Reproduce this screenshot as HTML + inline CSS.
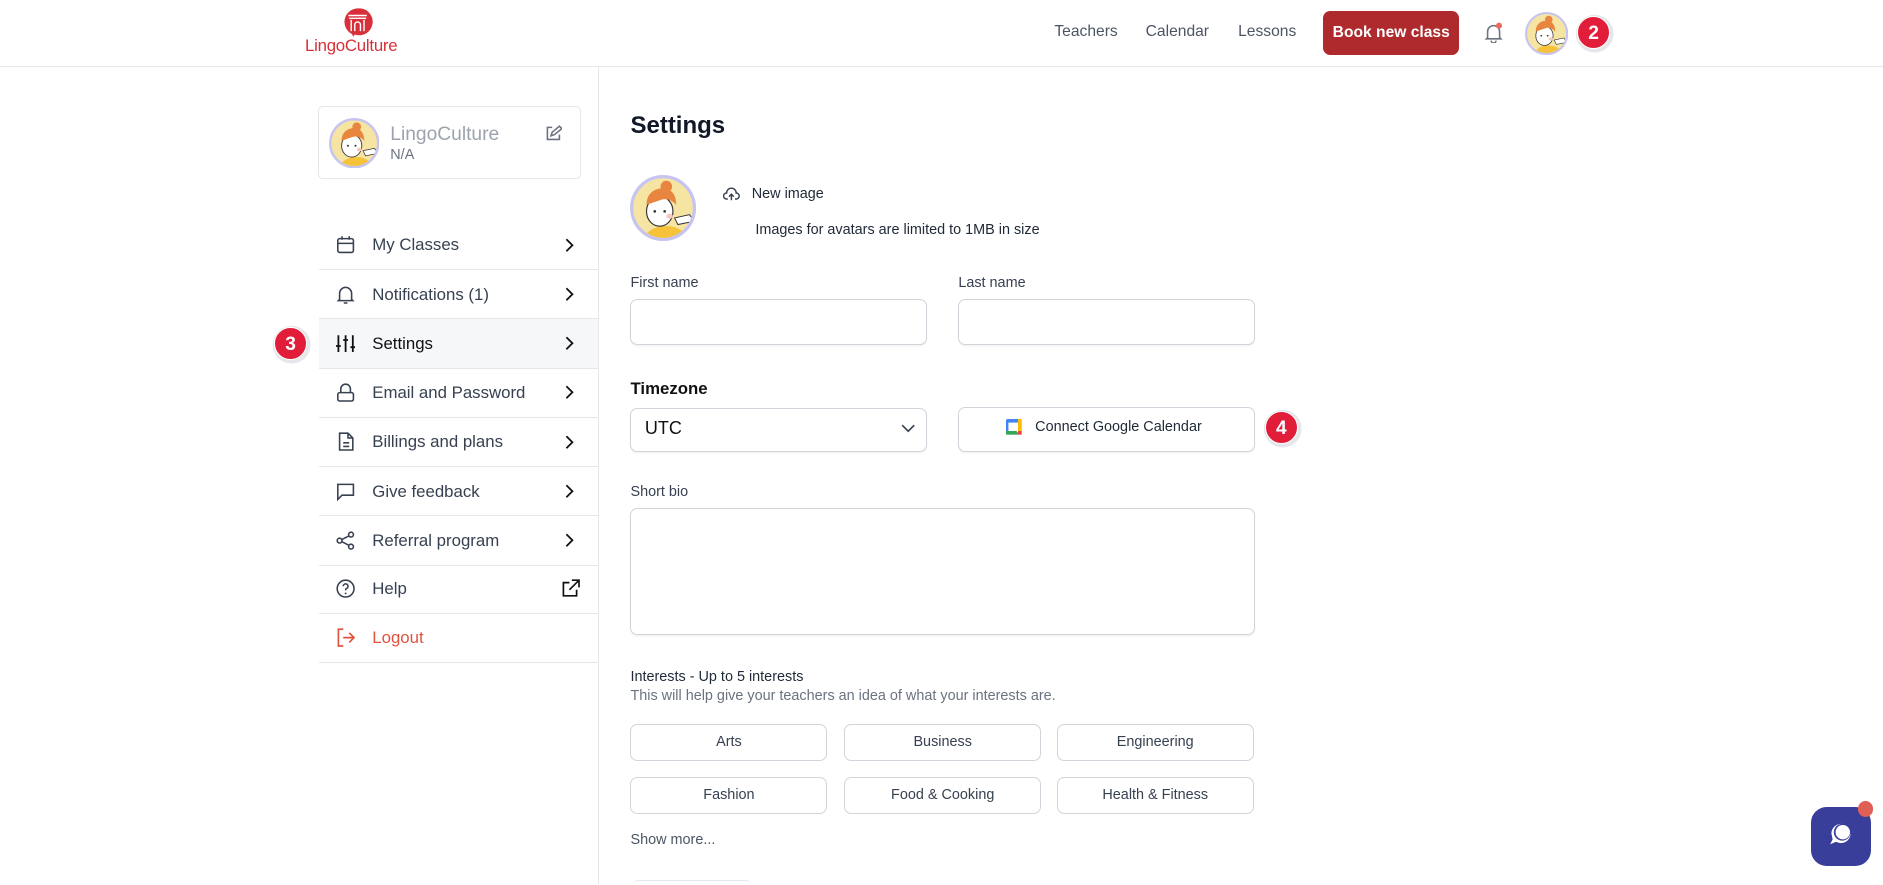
<!DOCTYPE html>
<html><head><meta charset="utf-8"><style>
*{box-sizing:border-box;margin:0;padding:0}
html,body{width:1883px;height:883px;overflow:hidden;background:#fff;font-family:"Liberation Sans",sans-serif;color:#1f2937}
#w{position:absolute;left:0;top:0;width:1568px;height:735px;zoom:1.2009;}
.a{position:absolute;white-space:nowrap}
.hdr{position:absolute;left:0;top:0;width:1568px;height:56px;border-bottom:1px solid #e5e7eb}
.nav{font-size:13px;color:#4b5563;top:19px}
.badge{position:absolute;width:28px;height:28px;border-radius:50%;background:#e11d3a;color:#fff;font-weight:bold;font-size:16px;text-align:center;line-height:28px;box-shadow:1px 1px 0 2px #e5e7eb;border:1px solid #fff}
.row{position:absolute;left:266px;width:232px;height:41px;border-bottom:1px solid #e5e7eb;font-size:14px;color:#374151}
.row svg.i{position:absolute;left:14px;top:12px}
.row span{position:absolute;left:44px;top:12px}
.row .ch{position:absolute;left:204px;top:14px}
.lbl{font-size:12px;color:#374151}
.inp{position:absolute;border:1px solid #d1d5db;border-radius:6px;background:#fff;box-shadow:0 1px 1px rgba(0,0,0,.05)}
.chip{position:absolute;width:164px;height:31px;border:1px solid #d1d5db;border-radius:6px;font-size:12px;color:#374151;text-align:center;line-height:29px}
svg.av{position:absolute}
</style></head><body><div id="w">
<svg width="0" height="0" style="position:absolute"><defs><symbol id="av" viewBox="0 0 40 40"><circle cx="20" cy="20" r="19" fill="#f6e4a3" stroke="#c7c5f0" stroke-width="2"/><clipPath id="cc"><circle cx="20" cy="20" r="18"/></clipPath><g clip-path="url(#cc)"><path d="M8 40c2-7 8-9 14-9s12 3 14 9z" fill="#f5c23a"/><path d="M27 26l9-2 3 4-10 2z" fill="#fff" stroke="#333" stroke-width=".6"/><ellipse cx="18" cy="22" rx="8" ry="9" fill="#fff" stroke="#333" stroke-width=".7"/><path d="M10 18c0-7 5-10 10-10s8 4 8 10c-3-3-6-4-9-3-3 1-6 2-9 3z" fill="#e8853f"/><circle cx="22" cy="7" r="3.5" fill="#e8853f"/><circle cx="15" cy="22" r=".8" fill="#333"/><circle cx="21" cy="22" r=".8" fill="#333"/><ellipse cx="24" cy="25" rx="2" ry="1.5" fill="#f3c9c0"/></g></symbol></defs></svg>
<div class="hdr"></div>
<svg class="a" style="left:285px;top:6px" width="26" height="26" viewBox="0 0 22 22"><path d="M11 1a9.5 9.5 0 0 0-4 18l1 2 1-1.6A9.5 9.5 0 1 0 11 1z" fill="#d8303a"/><path d="M4.5 6h13M5 8h12M6.5 9v8M15.5 9v8M9 17v-4.5a2 2 0 0 1 4 0V17" stroke="#fff" stroke-width="1" fill="none"/></svg>
<div class="a" style="left:254px;top:30px;font-size:14px;color:#d8303a;letter-spacing:-.2px">LingoCulture</div>
<div class="a nav" style="left:878px">Teachers</div>
<div class="a nav" style="left:954px">Calendar</div>
<div class="a nav" style="left:1031px">Lessons</div>
<div class="a" style="left:1102px;top:9px;width:113px;height:37px;background:#ae2a2d;border-radius:6px;color:#fff;font-weight:bold;font-size:13px;text-align:center;line-height:37px">Book new class</div>
<svg class="a" style="left:1236px;top:18px" width="16" height="18" viewBox="0 0 16 18"><path d="M3 13V8a5 5 0 0 1 10 0v5l1 1H2z M6 15.5a2 2 0 0 0 4 0" stroke="#6b7280" stroke-width="1.3" fill="none"/><circle cx="12.5" cy="3" r="2.5" fill="#ef6a5b"/></svg>
<svg class="av" style="left:1270px;top:10px" width="36" height="36"><use href="#av"/></svg>
<div class="badge" style="left:1313px;top:13px">2</div>
<div class="a" style="left:498px;top:56px;width:1px;height:680px;background:#e5e7eb"></div>

<div class="a" style="left:265px;top:88px;width:219px;height:61px;border:1px solid #e5e7eb;border-radius:4px"></div>
<svg class="av" style="left:274px;top:98px" width="42" height="42"><use href="#av"/></svg>
<div class="a" style="left:325px;top:103px;font-size:16px;color:#9ca3af">LingoCulture</div>
<div class="a" style="left:325px;top:122px;font-size:12px;color:#6b7280">N/A</div>
<svg class="a" style="left:454px;top:104px" width="14" height="14" viewBox="0 0 14 14"><path d="M6 2H2v10h10V8M5 9l1-3 6-5 2 2-6 5z" stroke="#6b7280" stroke-width="1.3" fill="none"/></svg>

<div class="row" style="top:184px"><svg class="i" width="16" height="16"><rect x="1.5" y="3" width="13" height="11.5" rx="1.5" stroke="#374151" stroke-width="1.3" fill="none"/><path d="M1.5 7h13M5 1v3M11 1v3" stroke="#374151" stroke-width="1.3"/></svg><span>My Classes</span><svg class="ch" width="8" height="12"><path d="M2 1l5 5-5 5" stroke="#111" stroke-width="1.5" fill="none"/></svg></div>
<div class="row" style="top:225px"><svg class="i" width="16" height="17"><path d="M3 12V7a5 5 0 0 1 10 0v5l1 1H2zM6.5 15h3" stroke="#374151" stroke-width="1.3" fill="none"/></svg><span>Notifications (1)</span><svg class="ch" width="8" height="12"><path d="M2 1l5 5-5 5" stroke="#111" stroke-width="1.5" fill="none"/></svg></div>
<div class="row" style="top:266px;background:#f6f7f9"><svg class="i" width="16" height="16"><path d="M2 1v14M8 1v14M14 1v14M0 10h4M6 5h4M12 11h4" stroke="#111" stroke-width="1.5"/></svg><span style="color:#111">Settings</span><svg class="ch" width="8" height="12"><path d="M2 1l5 5-5 5" stroke="#111" stroke-width="1.5" fill="none"/></svg></div>
<div class="row" style="top:307px"><svg class="i" width="16" height="16"><rect x="1.5" y="8" width="13" height="7" rx="1.5" stroke="#374151" stroke-width="1.3" fill="none"/><path d="M4 8V5a4 4 0 0 1 8 0v3" stroke="#374151" stroke-width="1.3" fill="none"/></svg><span>Email and Password</span><svg class="ch" width="8" height="12"><path d="M2 1l5 5-5 5" stroke="#111" stroke-width="1.5" fill="none"/></svg></div>
<div class="row" style="top:348px"><svg class="i" width="16" height="16"><path d="M3 1h7l4 4v10H3zM10 1v4h4M6 9h5M6 12h5" stroke="#374151" stroke-width="1.3" fill="none"/></svg><span>Billings and plans</span><svg class="ch" width="8" height="12"><path d="M2 1l5 5-5 5" stroke="#111" stroke-width="1.5" fill="none"/></svg></div>
<div class="row" style="top:389px"><svg class="i" width="16" height="16"><path d="M1.5 2h13v9H5l-3.5 3.5z" stroke="#374151" stroke-width="1.3" fill="none"/></svg><span>Give feedback</span><svg class="ch" width="8" height="12"><path d="M2 1l5 5-5 5" stroke="#111" stroke-width="1.5" fill="none"/></svg></div>
<div class="row" style="top:430px"><svg class="i" width="16" height="16"><circle cx="3" cy="8" r="2" stroke="#374151" stroke-width="1.3" fill="none"/><circle cx="12.5" cy="3" r="2" stroke="#374151" stroke-width="1.3" fill="none"/><circle cx="12.5" cy="13" r="2" stroke="#374151" stroke-width="1.3" fill="none"/><path d="M5 7l6-3M5 9l6 3" stroke="#374151" stroke-width="1.3"/></svg><span>Referral program</span><svg class="ch" width="8" height="12"><path d="M2 1l5 5-5 5" stroke="#111" stroke-width="1.5" fill="none"/></svg></div>
<div class="row" style="top:470px"><svg class="i" width="16" height="16"><circle cx="8" cy="8" r="7" stroke="#374151" stroke-width="1.3" fill="none"/><path d="M6 6a2 2 0 1 1 2.5 2c-.5.2-.5.8-.5 1.5" stroke="#374151" stroke-width="1.3" fill="none"/><circle cx="8" cy="12" r=".8" fill="#374151"/></svg><span>Help</span><svg style="position:absolute;left:201px;top:12px" width="16" height="16"><path d="M7 3H2v11h11V9M9 1h6v6M15 1L7 9" stroke="#111" stroke-width="1.4" fill="none"/></svg></div>
<div class="row" style="top:511px"><svg class="i" width="16" height="16"><path d="M6 1H2v14h4M6 8h9M11 4l4 4-4 4" stroke="#e0533e" stroke-width="1.4" fill="none"/></svg><span style="color:#e0533e">Logout</span></div>
<div class="badge" style="left:228px;top:272px">3</div>

<div class="a" style="left:525px;top:93px;font-size:20px;font-weight:bold;color:#111827">Settings</div>
<svg class="av" style="left:525px;top:146px" width="55" height="55"><use href="#av"/></svg>
<svg class="a" style="left:602px;top:156px" width="14" height="12"><path d="M4 10H3a2.5 2.5 0 0 1 0-5 4 4 0 0 1 8 0 2.5 2.5 0 0 1 0 5h-1M7 11V6M5 8l2-2 2 2" stroke="#374151" stroke-width="1.2" fill="none"/></svg>
<div class="a" style="left:626px;top:155px;font-size:12px;color:#1f2937">New image</div>
<div class="a" style="left:629px;top:185px;font-size:12px;color:#1f2937">Images for avatars are limited to 1MB in size</div>

<div class="a lbl" style="left:525px;top:229px">First name</div>
<div class="inp" style="left:525px;top:249px;width:247px;height:38px"></div>
<div class="a lbl" style="left:798px;top:229px">Last name</div>
<div class="inp" style="left:798px;top:249px;width:247px;height:38px"></div>

<div class="a" style="left:525px;top:316px;font-size:14px;font-weight:bold;color:#111">Timezone</div>
<div class="inp" style="left:525px;top:340px;width:247px;height:36px"></div>
<div class="a" style="left:537px;top:348px;font-size:15px;color:#111">UTC</div>
<svg class="a" style="left:750px;top:353px" width="12" height="8"><path d="M1 1l5 5 5-5" stroke="#374151" stroke-width="1.4" fill="none"/></svg>
<div class="inp" style="left:798px;top:339px;width:247px;height:37px"></div>
<svg class="a" style="left:838px;top:349px" width="13" height="13"><rect x="0" y="0" width="13" height="13" rx="1.5" fill="#4285f4"/><rect x="2" y="3" width="9" height="8" fill="#fff"/><rect x="0" y="10" width="9" height="3" fill="#34a853"/><rect x="10" y="0" width="3" height="10" fill="#fbbc04"/><rect x="10" y="10" width="3" height="3" fill="#ea4335"/></svg>
<div class="a" style="left:862px;top:349px;font-size:12px;color:#1f2937">Connect Google Calendar</div>
<div class="badge" style="left:1053px;top:342px">4</div>

<div class="a lbl" style="left:525px;top:403px">Short bio</div>
<div class="inp" style="left:525px;top:423px;width:520px;height:106px"></div>

<div class="a" style="left:525px;top:557px;font-size:12px;color:#1f2937">Interests - Up to 5 interests</div>
<div class="a" style="left:525px;top:573px;font-size:12px;color:#6b7280">This will help give your teachers an idea of what your interests are.</div>
<div class="chip" style="left:525px;top:603px">Arts</div>
<div class="chip" style="left:703px;top:603px">Business</div>
<div class="chip" style="left:880px;top:603px">Engineering</div>
<div class="chip" style="left:525px;top:647px">Fashion</div>
<div class="chip" style="left:703px;top:647px">Food &amp; Cooking</div>
<div class="chip" style="left:880px;top:647px">Health &amp; Fitness</div>
<div class="a" style="left:525px;top:693px;font-size:12px;color:#4b5563">Show more...</div>
<div class="a" style="left:527px;top:733px;width:98px;height:4px;border-top:1px solid #e5e7eb;border-radius:4px 4px 0 0"></div>

<div class="a" style="left:1508px;top:672px;width:50px;height:49px;background:#3a3e9b;border-radius:13px"></div>
<svg class="a" style="left:1518px;top:682px" width="30" height="30" viewBox="0 0 30 30"><path d="M7 12a8 8 0 1 1 4 7l-5 2 2-4z" fill="#fff"/><circle cx="16" cy="11" r="7" fill="#3a3e9b"/><circle cx="16.5" cy="11" r="6" fill="#fff"/></svg>
<div class="a" style="left:1547px;top:667px;width:13px;height:13px;border-radius:50%;background:#e06055"></div>
</div></body></html>
